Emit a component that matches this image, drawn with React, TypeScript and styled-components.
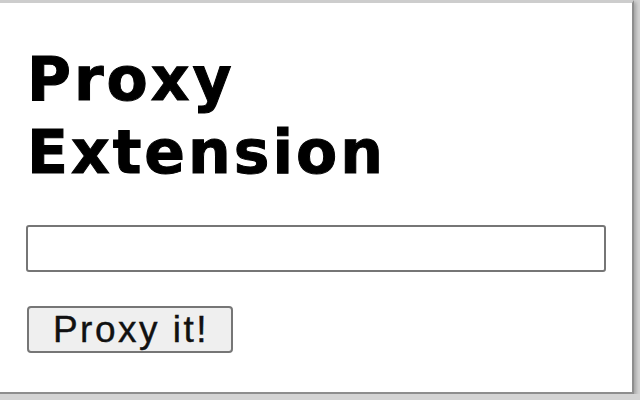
import React, { useState } from 'react'
import styled, { createGlobalStyle } from 'styled-components'

const GlobalStyle = createGlobalStyle`
  html, body {
    margin: 0;
    padding: 0;
    background: #d4d4d4;
  }
`;

const Popup = styled.div`
  box-sizing: border-box;
  width: 634px;
  height: 394px;
  background: #fff;
  border-top: 3px solid #cdcdcd;
  border-right: 2px solid #8e8e8e;
  border-bottom: 2px solid #8e8e8e;
  box-shadow: 2px 2px 4px rgba(0, 0, 0, 0.25);
  padding: 40px 34px 0 26px;
  display: flex;
  flex-direction: column;
  align-items: flex-start;
`;

const Title = styled.h1`
  margin: 0 0 0 1px;
  font-family: "DejaVu Sans", Verdana, sans-serif;
  font-weight: bold;
  font-size: 60px;
  line-height: 73px;
  letter-spacing: 3px;
  -webkit-text-stroke: 1px #000;
  color: #000;
`;

const UrlInput = styled.input`
  box-sizing: border-box;
  width: 580px;
  height: 47px;
  margin-top: 36px;
  border: 2px solid #767676;
  border-radius: 3px;
  background: #fff;
  font-family: "Liberation Sans", Arial, sans-serif;
  font-size: 30px;
  padding: 0 8px;
  outline: none;
`;

const ProxyButton = styled.button`
  box-sizing: border-box;
  width: 206px;
  height: 47px;
  margin: 34px 0 0 1px;
  padding: 0 0 0 2px;
  border: 2px solid #767676;
  border-radius: 4px;
  background: #efefef;
  color: #111;
  font-family: "Liberation Sans", Arial, sans-serif;
  font-size: 37px;
  letter-spacing: 2.5px;
  -webkit-text-stroke: 0.4px #111;
  cursor: pointer;
`;

const App = () => {
  const [url, setUrl] = useState('')

  return (
    <>
      <GlobalStyle />
      <Popup>
        <Title>
          Proxy
          <br />
          Extension
        </Title>
        <UrlInput type="text" value={url} onChange={(e) => setUrl(e.target.value)} />
        <ProxyButton>Proxy it!</ProxyButton>
      </Popup>
    </>
  )
}

export default App
